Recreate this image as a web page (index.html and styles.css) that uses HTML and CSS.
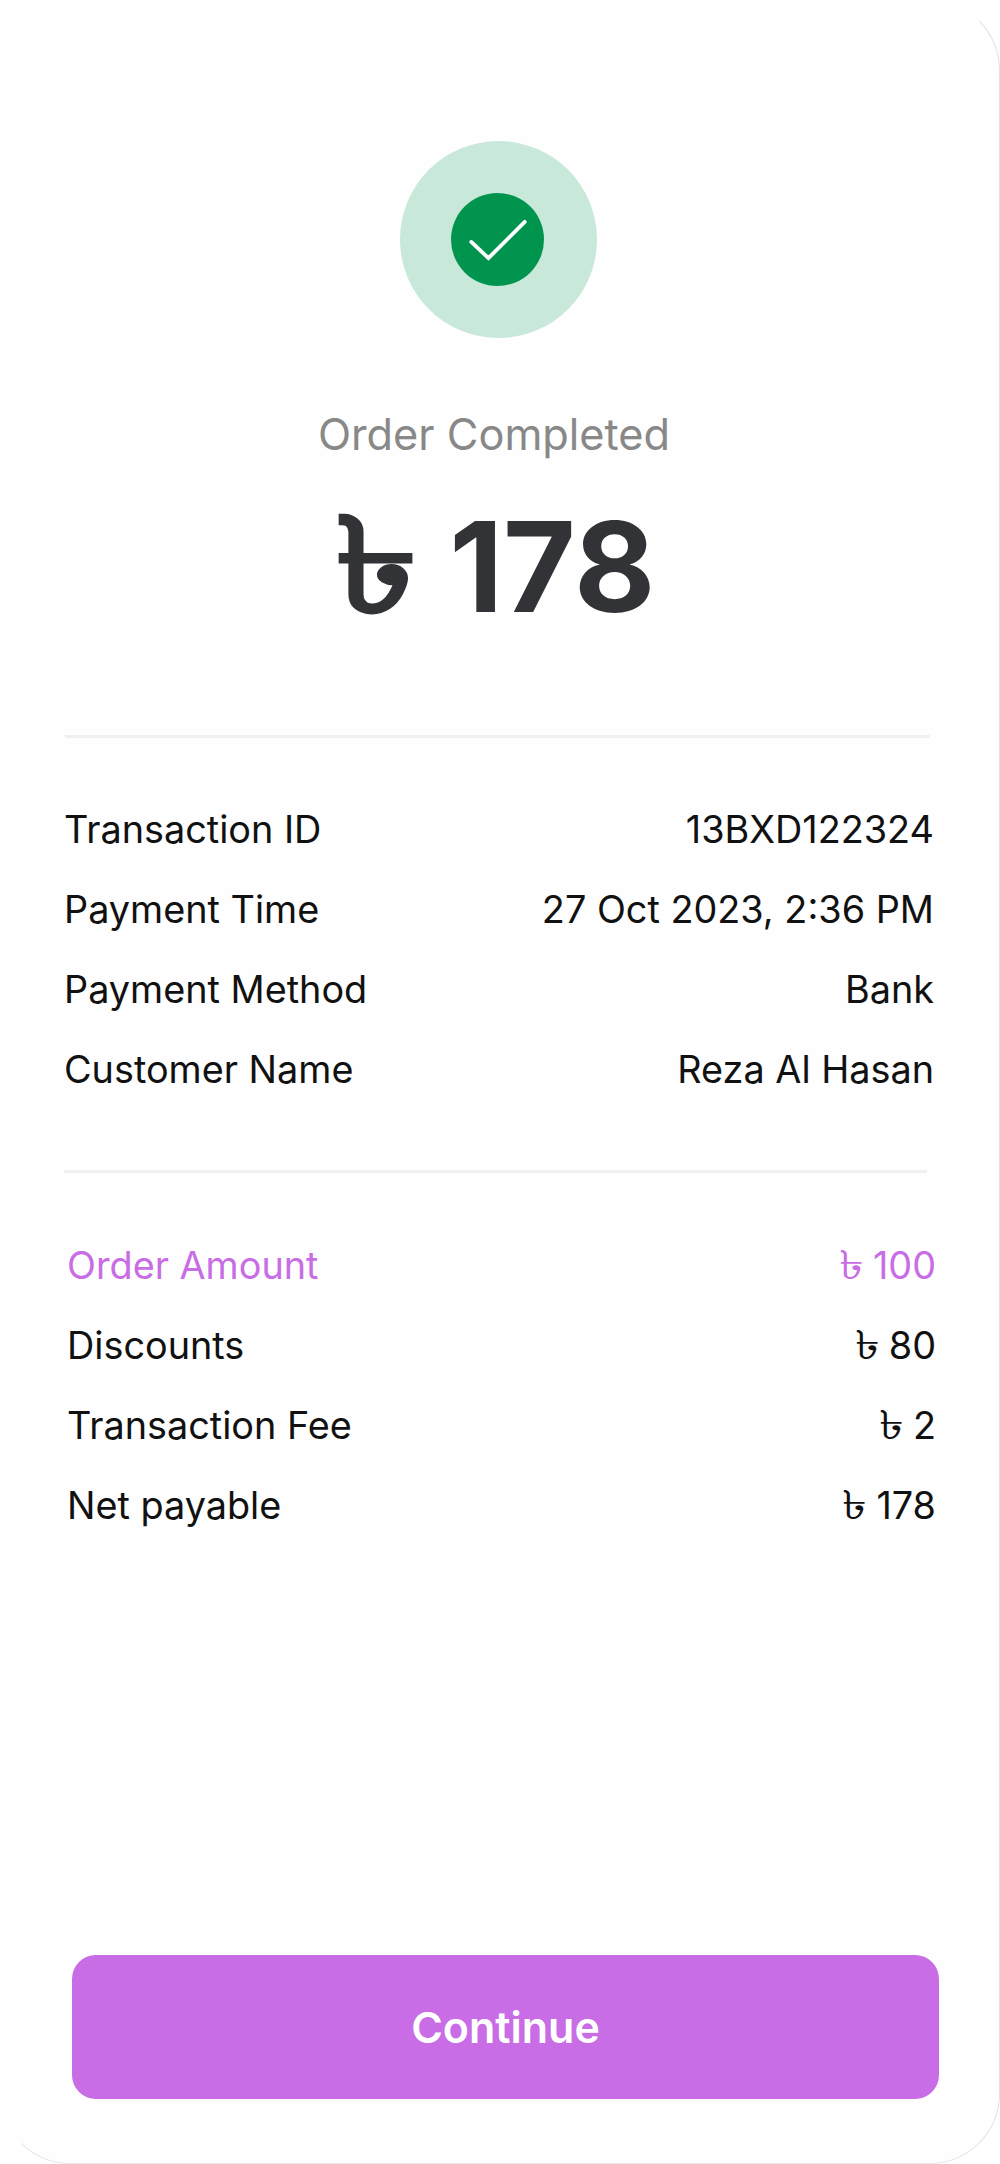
FILE: index.html
```html
<!DOCTYPE html>
<html lang="en">
<head>
    <meta charset="UTF-8">
    <meta name="viewport" content="width=device-width, initial-scale=1.0">
    <title>Order Completed</title>
    <link rel="stylesheet" href="styles.css">
</head>
<body>
    <div class="screen">
        <div class="summary">
            <div class="status-ring">
                <div class="status-dot">
                    <svg class="status-check" viewBox="0 0 60 44" width="58" height="42">
                        <path d="M2 24 L20 41 L58 3" fill="none" stroke="#fff" stroke-width="4" stroke-linecap="round" stroke-linejoin="miter"></path>
                    </svg>
                </div>
            </div>
            <p class="status-label">Order Completed</p>
            <h1 class="total"><span class="taka">৳</span> 178</h1>
        </div>

        <div class="divider divider-first"></div>
        <div class="details">
            <div class="row"><span>Transaction ID</span><span>13BXD122324</span></div>
            <div class="row"><span>Payment Time</span><span>27 Oct 2023, 2:36 PM</span></div>
            <div class="row"><span>Payment Method</span><span>Bank</span></div>
            <div class="row"><span>Customer Name</span><span>Reza Al Hasan</span></div>
        </div>

        <div class="divider divider-second"></div>
        <div class="details details-amounts">
            <div class="row row-accent"><span>Order Amount</span><span><span class="taka">৳</span> 100</span></div>
            <div class="row"><span>Discounts</span><span><span class="taka">৳</span> 80</span></div>
            <div class="row"><span>Transaction Fee</span><span><span class="taka">৳</span> 2</span></div>
            <div class="row"><span>Net payable</span><span><span class="taka">৳</span> 178</span></div>
        </div>

        <button class="btn-continue">Continue</button>
    </div>
</body>
</html>
```

FILE: styles.css
```css
* { margin: 0; padding: 0; box-sizing: border-box; }
body { font-family: Inter, "Noto Sans", "DejaVu Sans", sans-serif; background: #fff; width: 1000px; height: 2164px; overflow: hidden; }
.screen { position: relative; display: flex; flex-direction: column; height: 2164px; background: #fefefe; border: 1px solid #e2e2e2; border-top-color: #fefefe; border-left-color: #fefefe; border-bottom-color: #e8e8e8; border-radius: 70px; padding-top: 140px; }
.summary { display: flex; flex-direction: column; align-items: center; }
.status-ring { display: flex; align-items: center; justify-content: center; width: 197px; height: 197px; border-radius: 50%; background: #c8e8da; margin-left: -3px; }
.status-dot { display: flex; align-items: center; justify-content: center; width: 93px; height: 93px; border-radius: 50%; background: #01944f; margin-left: -2px; }
.status-check { display: block; }
.status-label { margin-top: 71px; margin-left: -12px; font-size: 43.3px; line-height: 50px; color: #888; }
.total { margin-top: 30px; margin-left: -15px; font-size: 125px; line-height: 155px; font-weight: 700; color: #323336; }
.taka { display: inline-block; font-size: 1.06em; line-height: 1; transform: scaleX(1.25); margin: 0 0.08em 0 0.1em; }
.divider { height: 3px; background: #f0f0f0; }
.divider-first { margin: 91px 69px 0 64px; }
.divider-second { margin: 77px 72px 0 63px; }
.details { display: flex; flex-direction: column; gap: 32px; margin: 67px 65px 0 63px; }
.details-amounts { margin: 68px 63px 0 66px; }
.row { display: flex; justify-content: space-between; font-size: 37.8px; line-height: 48px; color: #111; }
.row .taka { margin: 0 0.04em 0 0; }
.row-accent { color: #c86de5; }
.btn-continue { position: absolute; left: 71px; bottom: 64px; width: 867px; height: 144px; border: none; border-radius: 24px; background: #c86de5; color: #fff; font-family: inherit; font-size: 43px; font-weight: 600; }
```
